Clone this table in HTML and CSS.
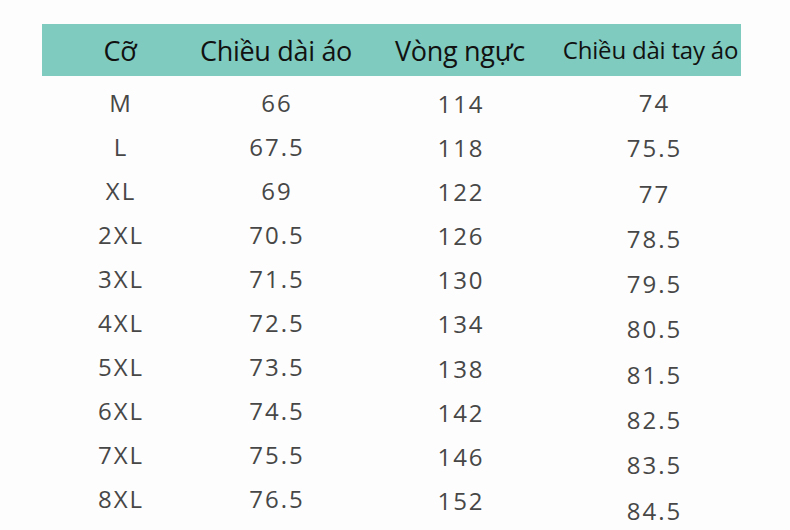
FILE: index.html
```html
<!DOCTYPE html>
<html lang="vi">
<head>
<meta charset="utf-8">
<link rel="stylesheet" href="styles.css">
</head>
<body>
<div class="chart">
  <div class="head">
    <div class="h c1">Cỡ</div>
    <div class="h c2">Chiều dài áo</div>
    <div class="h c3">Vòng ngực</div>
    <div class="h c4 small">Chiều dài tay áo</div>
  </div>
  <div class="body">
    <div class="col c1">
      <span>M</span><span>L</span><span>XL</span><span>2XL</span><span>3XL</span><span>4XL</span><span>5XL</span><span>6XL</span><span>7XL</span><span>8XL</span>
    </div>
    <div class="col c2">
      <span>66</span><span>67.5</span><span>69</span><span>70.5</span><span>71.5</span><span>72.5</span><span>73.5</span><span>74.5</span><span>75.5</span><span>76.5</span>
    </div>
    <div class="col c3">
      <span>114</span><span>118</span><span>122</span><span>126</span><span>130</span><span>134</span><span>138</span><span>142</span><span>146</span><span>152</span>
    </div>
    <div class="col c4">
      <span>74</span><span>75.5</span><span>77</span><span>78.5</span><span>79.5</span><span>80.5</span><span>81.5</span><span>82.5</span><span>83.5</span><span>84.5</span>
    </div>
  </div>
</div>
</body>
</html>
```

FILE: styles.css
```css
html, body {
  margin: 0;
  padding: 0;
  background: #fdfdfd;
  width: 790px;
  height: 530px;
  overflow: hidden;
}
.chart {
  margin: 24px 0 0 42px;
  width: 699px;
}
.head, .body {
  display: grid;
  grid-template-columns: 156px 156px 212px 175px;
}
.head {
  height: 52px;
  background: #7fcbbf;
  align-items: center;
}
.h {
  display: flex;
  justify-content: center;
  white-space: nowrap;
  font-family: "Open Sans", sans-serif;
  font-size: 27px;
  color: #111;
  line-height: 1;
  letter-spacing: -0.3px;
}
.h.small {
  font-size: 24px;
  letter-spacing: -0.2px;
  padding-right: 6px;
}
.col {
  display: flex;
  flex-direction: column;
  align-items: center;
  font-family: "Open Sans", sans-serif;
  font-size: 24px;
  letter-spacing: 2px;
  color: #474747;
  line-height: 24px;
  padding-top: 15px;
  gap: 20px;
}
.col span { padding-left: 2px; }
.col.c3 { gap: 20.1px; padding-top: 16px; }
.col.c4 { gap: 21.3px; padding-top: 15px; }
```
